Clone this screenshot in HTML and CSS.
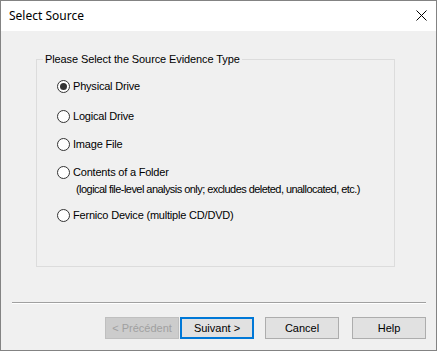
FILE: index.html
```html
<!DOCTYPE html>
<html>
<head>
<meta charset="utf-8">
<link rel="stylesheet" href="styles.css">
</head>
<body>
<div class="window">
  <div class="titlebar">
    <span class="title">Select Source</span>
    <svg class="close" width="11" height="11" viewBox="0 0 11 11"><path d="M0.5 0.5 L10.5 10.5 M10.5 0.5 L0.5 10.5" stroke="#000" stroke-width="1" fill="none"/></svg>
  </div>
  <div class="content">
    <fieldset class="group">
      <legend class="legend">Please Select the Source Evidence Type</legend>
      <div class="options">
        <div class="option first"><span class="radio checked"></span><span class="label">Physical Drive</span></div>
        <div class="option second"><span class="radio"></span><span class="label">Logical Drive</span></div>
        <div class="option"><span class="radio"></span><span class="label">Image File</span></div>
        <div class="option"><span class="radio"></span><span class="label">Contents of a Folder</span></div>
        <div class="note">(logical file-level analysis only; excludes deleted, unallocated, etc.)</div>
        <div class="option last"><span class="radio"></span><span class="label">Fernico Device (multiple CD/DVD)</span></div>
      </div>
    </fieldset>
    <div class="separator"></div>
    <div class="buttons">
      <button class="btn disabled">&lt; Précédent</button>
      <button class="btn default">Suivant &gt;</button>
      <button class="btn cancel">Cancel</button>
      <button class="btn help">Help</button>
    </div>
  </div>
</div>
</body>
</html>
```

FILE: styles.css
```css
html, body {
  margin: 0;
  padding: 0;
  background: #f0f0f0;
}
.window {
  width: 437px;
  height: 351px;
  box-sizing: border-box;
  border: 1px solid #838383;
  display: flex;
  flex-direction: column;
  font-family: "Liberation Sans", Arial, sans-serif;
  font-size: 11px;
  color: #000;
}
.titlebar {
  height: 30px;
  background: #fff;
  display: flex;
  align-items: center;
  justify-content: space-between;
  padding: 0 9px 0 8px;
  flex: none;
}
.title {
  font-family: "Noto Sans", "Open Sans", sans-serif;
  font-size: 12px;
  line-height: 16px;
  color: #000;
}
.close {
  display: block;
  margin-top: -1px;
}
.content {
  flex: 1;
  background: #f0f0f0;
  display: flex;
  flex-direction: column;
}
.group {
  margin: 22px 0 0 35px;
  width: 359px;
  box-sizing: border-box;
  border: 1px solid #dcdcdc;
  padding: 0 0 44px 0;
  min-width: 0;
}
.legend {
  margin-left: 6px;
  padding: 0 2px;
  line-height: 13px;
  letter-spacing: -0.1px;
}
.options {
  display: flex;
  flex-direction: column;
  padding: 14px 0 0 20px;
}
.option {
  display: flex;
  align-items: center;
  height: 13px;
  line-height: 13px;
  margin-top: 15px;
}
.label {
  letter-spacing: -0.2px;
}
.option.first {
  margin-top: 0;
}
.option.second {
  margin-top: 17px;
}
.option.last {
  margin-top: 13px;
}
.radio {
  width: 13px;
  height: 13px;
  box-sizing: border-box;
  border: 1px solid #333;
  border-radius: 50%;
  background: #fff;
  display: flex;
  align-items: center;
  justify-content: center;
  margin-right: 3px;
  flex: none;
}
.radio.checked::after {
  content: "";
  width: 7px;
  height: 7px;
  border-radius: 50%;
  background: #333;
}
.note {
  margin: 4px 0 0 19px;
  line-height: 13px;
  height: 13px;
  white-space: nowrap;
  letter-spacing: -0.55px;
}
.separator {
  margin: 35px 0 0 11px;
  width: 414px;
  height: 1px;
  background: #a0a0a0;
  border-bottom: 1px solid #fff;
}
.buttons {
  display: flex;
  justify-content: flex-end;
  padding: 13px 10px 0 0;
}
.btn {
  width: 74px;
  height: 22px;
  box-sizing: border-box;
  font-family: "Liberation Sans", Arial, sans-serif;
  font-size: 11px;
  background: #e1e1e1;
  border: 1px solid #adadad;
  color: #000;
  padding: 0;
  margin: 0;
}
.btn.disabled {
  background: #cccccc;
  border-color: #bfbfbf;
  color: #a0a0a0;
}
.btn.default {
  border: 2px solid #0078d7;
  margin-left: 1px;
}
.btn.cancel {
  margin-left: 11px;
}
.btn.help {
  margin-left: 13px;
}
```
